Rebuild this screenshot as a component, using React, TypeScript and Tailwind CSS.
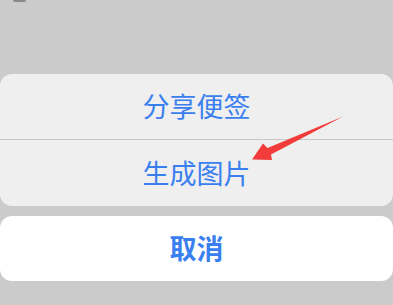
import React from "react";

export default function App() {
  const font = { fontFamily: '"Noto Sans CJK SC", "Noto Sans", sans-serif' };
  return (
    <div className="relative h-[305px] w-[393px] overflow-hidden bg-[#cbcbcb]" style={font}>
      <div className="h-[74px]">
        <div className="ml-[13px] h-[2px] w-[13px] rounded-b-sm bg-[#8a8a8a]" />
      </div>
      <div className="flex h-[132px] flex-col overflow-hidden rounded-[12px] bg-[#efefef]">
        <div className="flex h-[66px] items-center justify-center border-b border-[#c6c6c6] text-[27px] text-[#3a7ff0]">
          分享便签
        </div>
        <div className="flex flex-1 items-center justify-center text-[27px] text-[#3a7ff0]">
          生成图片
        </div>
      </div>
      <div className="mt-[10px] flex h-[65px] items-center justify-center rounded-[12px] bg-white text-[27px] font-semibold text-[#3a7ff0]">
        取消
      </div>
      <svg className="absolute left-0 top-0" width="393" height="305" viewBox="0 0 393 305">
        <polygon
          points="343,116.5 271,154.5 272,160 252,159.5 263,143.5 267.5,148"
          fill="#f23c3c"
        />
      </svg>
    </div>
  );
}
